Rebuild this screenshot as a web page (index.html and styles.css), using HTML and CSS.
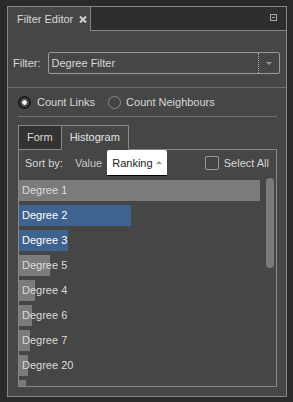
FILE: index.html
```html
<!DOCTYPE html>
<html lang="en">
<head>
    <meta charset="UTF-8">
    <title>Filter Editor</title>
    <link rel="stylesheet" href="styles.css">
</head>
<body>
    <div class="panel">
        <div class="panel-head">
            <div class="tab-title">
                Filter Editor
                <svg class="close" width="8" height="7" viewBox="0 0 8 7">
                    <path d="M1 0.5 L7 6.5 M7 0.5 L1 6.5" stroke="#cfcfcf" stroke-width="2"/>
                </svg>
            </div>
            <div class="head-fill">
                <svg width="7" height="7" viewBox="0 0 7 7">
                    <rect x="0.5" y="0.5" width="6" height="6" fill="none" stroke="#a8a8a8"/>
                    <line x1="2" y1="3.5" x2="5" y2="3.5" stroke="#a8a8a8"/>
                </svg>
            </div>
        </div>

        <div class="filter-row">
            <span class="label">Filter:</span>
            <div class="combo">
                <span class="combo-text">Degree Filter</span>
                <span class="combo-btn"><span class="arrow-down"></span></span>
            </div>
        </div>

        <div class="options">
            <div class="radios">
                <span class="radio checked"></span><span class="radio-label">Count Links</span>
                <span class="radio"></span><span class="radio-label">Count Neighbours</span>
            </div>

            <div class="tabs">
                <div class="tab">Form</div>
                <div class="tab active">Histogram</div>
                <div class="tab-fill"></div>
            </div>

            <div class="tab-body">
                <div class="sort-row">
                    <span class="sort-label">Sort by:</span>
                    <span class="sort-opt">Value</span>
                    <span class="sort-btn">Ranking <span class="arrow-up"></span></span>
                    <span class="check"></span>
                    <span class="check-label">Select All</span>
                </div>
                <div class="list-wrap">
                    <div class="list" id="list"></div>
                    <div class="scrollbar"></div>
                </div>
            </div>
        </div>
    </div>

    <script>
        // histogram rows: label, bar width in px, selected
        // the last row is scrolled mostly out of view, only its bar top shows
        const rows = [
            ['Degree 1', 241, false],
            ['Degree 2', 112, true],
            ['Degree 3', 49, true],
            ['Degree 5', 31, false],
            ['Degree 4', 16, false],
            ['Degree 6', 13, false],
            ['Degree 7', 11, false],
            ['Degree 20', 9, false],
            ['', 7, false]
        ];

        const list = document.getElementById('list');
        rows.forEach(([name, w, sel]) => {
            const row = document.createElement('div');
            row.className = 'row' + (sel ? ' selected' : '');
            row.style.backgroundSize = w + 'px 100%';
            row.textContent = name;
            list.appendChild(row);
        });
    </script>
</body>
</html>
```

FILE: styles.css
```css
body {
    margin: 0;
    padding: 6px 0 0 7px;
    background: #2a2a2a;
    font-family: 'Liberation Sans', Arial, sans-serif;
    font-size: 11px;
    color: #d8d8d8;
    height: 396px;
    overflow: hidden;
}

.panel {
    width: 280px;
    box-sizing: border-box;
    border: 1px solid #878787;
    background: #464646;
}

.panel-head {
    display: flex;
    height: 24px;
}

.tab-title {
    width: 83px;
    padding-left: 9px;
    box-sizing: border-box;
    border-right: 1px solid #878787;
    line-height: 23px;
    display: flex;
    align-items: center;
    gap: 6px;
}

.close {
    margin-top: 1px;
}

.head-fill {
    flex: 1;
    background: #2e2e2e;
    border-bottom: 1px solid #878787;
    display: flex;
    justify-content: flex-end;
    padding: 7px 9px 0 0;
}

.filter-row {
    display: flex;
    align-items: center;
    gap: 7px;
    padding: 21px 6px 13px 5px;
    border-bottom: 1px solid #6e6e6e;
}

.combo {
    flex: 1;
    height: 22px;
    box-sizing: border-box;
    border: 1px solid #9a9a9a;
    border-radius: 2px;
    display: flex;
    align-items: center;
}

.combo-text {
    flex: 1;
    padding-left: 3px;
}

.combo-btn {
    width: 20px;
    align-self: stretch;
    border-left: 1px dotted #b0b0b0;
    display: flex;
    align-items: center;
    justify-content: center;
}

.arrow-down {
    width: 0;
    height: 0;
    border-left: 3.5px solid transparent;
    border-right: 3.5px solid transparent;
    border-top: 3px solid #959595;
    margin-top: 1px;
}

.options {
    padding: 0 9px 9px 10px;
}

.radios {
    height: 28px;
    display: flex;
    align-items: center;
    border-bottom: 1px solid #707070;
}

.radio {
    width: 13px;
    height: 13px;
    box-sizing: border-box;
    border-radius: 50%;
    border: 1px solid #8a8a8a;
    background: #434343;
}

.radio.checked {
    border: 2px solid #1b1b1b;
    background: radial-gradient(circle, #f2f2f2 0 2px, #4e4e4e 2.6px);
}

.radio-label {
    margin: 0 13px 0 6px;
}

.radio-label:last-child {
    margin-left: 5px;
}

.tabs {
    display: flex;
    margin-top: 8px;
    height: 25px;
}

.tab {
    border: 1px solid #888;
    padding: 0 8px;
    line-height: 23px;
    box-sizing: border-box;
}

.tab:first-child {
    background: #333;
    border-right: none;
}

.tab.active {
    border-bottom-color: #464646;
    color: #e4e4e4;
}

.tab-fill {
    flex: 1;
    border-bottom: 1px solid #888;
}

.tab-body {
    border: 1px solid #888;
    border-top: none;
}

.sort-row {
    height: 26px;
    display: flex;
    align-items: center;
    padding: 0 7px 0 6px;
}

.sort-label {
    margin-right: 12px;
}

.sort-opt {
    color: #c8c8c8;
    margin-right: 5px;
}

.sort-btn {
    height: 26px;
    align-self: flex-start;
    box-sizing: border-box;
    background: #fff;
    color: #1c1c1c;
    border-bottom: 1px solid #000;
    border-radius: 2px 2px 0 0;
    padding: 0 5px;
    display: flex;
    align-items: center;
    gap: 3px;
}

.arrow-up {
    width: 0;
    height: 0;
    border-left: 3px solid transparent;
    border-right: 3px solid transparent;
    border-bottom: 3px solid #9a9a9a;
}

.check {
    margin-left: auto;
    width: 12px;
    height: 12px;
    border: 1px solid #9a9a9a;
    border-radius: 2px;
    background: #444;
}

.check-label {
    margin-left: 5px;
}

.list-wrap {
    height: 210px;
    display: flex;
    overflow: hidden;
}

.list {
    flex: 1;
    padding-top: 4px;
    display: flex;
    flex-direction: column;
    gap: 4px;
}

.row {
    flex: none;
    height: 21px;
    line-height: 21px;
    padding-left: 3px;
    color: #dcdcdc;
    background: linear-gradient(#7b7b7b, #7b7b7b) no-repeat;
}

.row.selected {
    background-image: linear-gradient(#3f6390, #3f6390);
    color: #fff;
}

.scrollbar {
    width: 8px;
    height: 90px;
    margin: 2px 2px 0 4px;
    border-radius: 4px;
    background: #7b7b7b;
}
```
